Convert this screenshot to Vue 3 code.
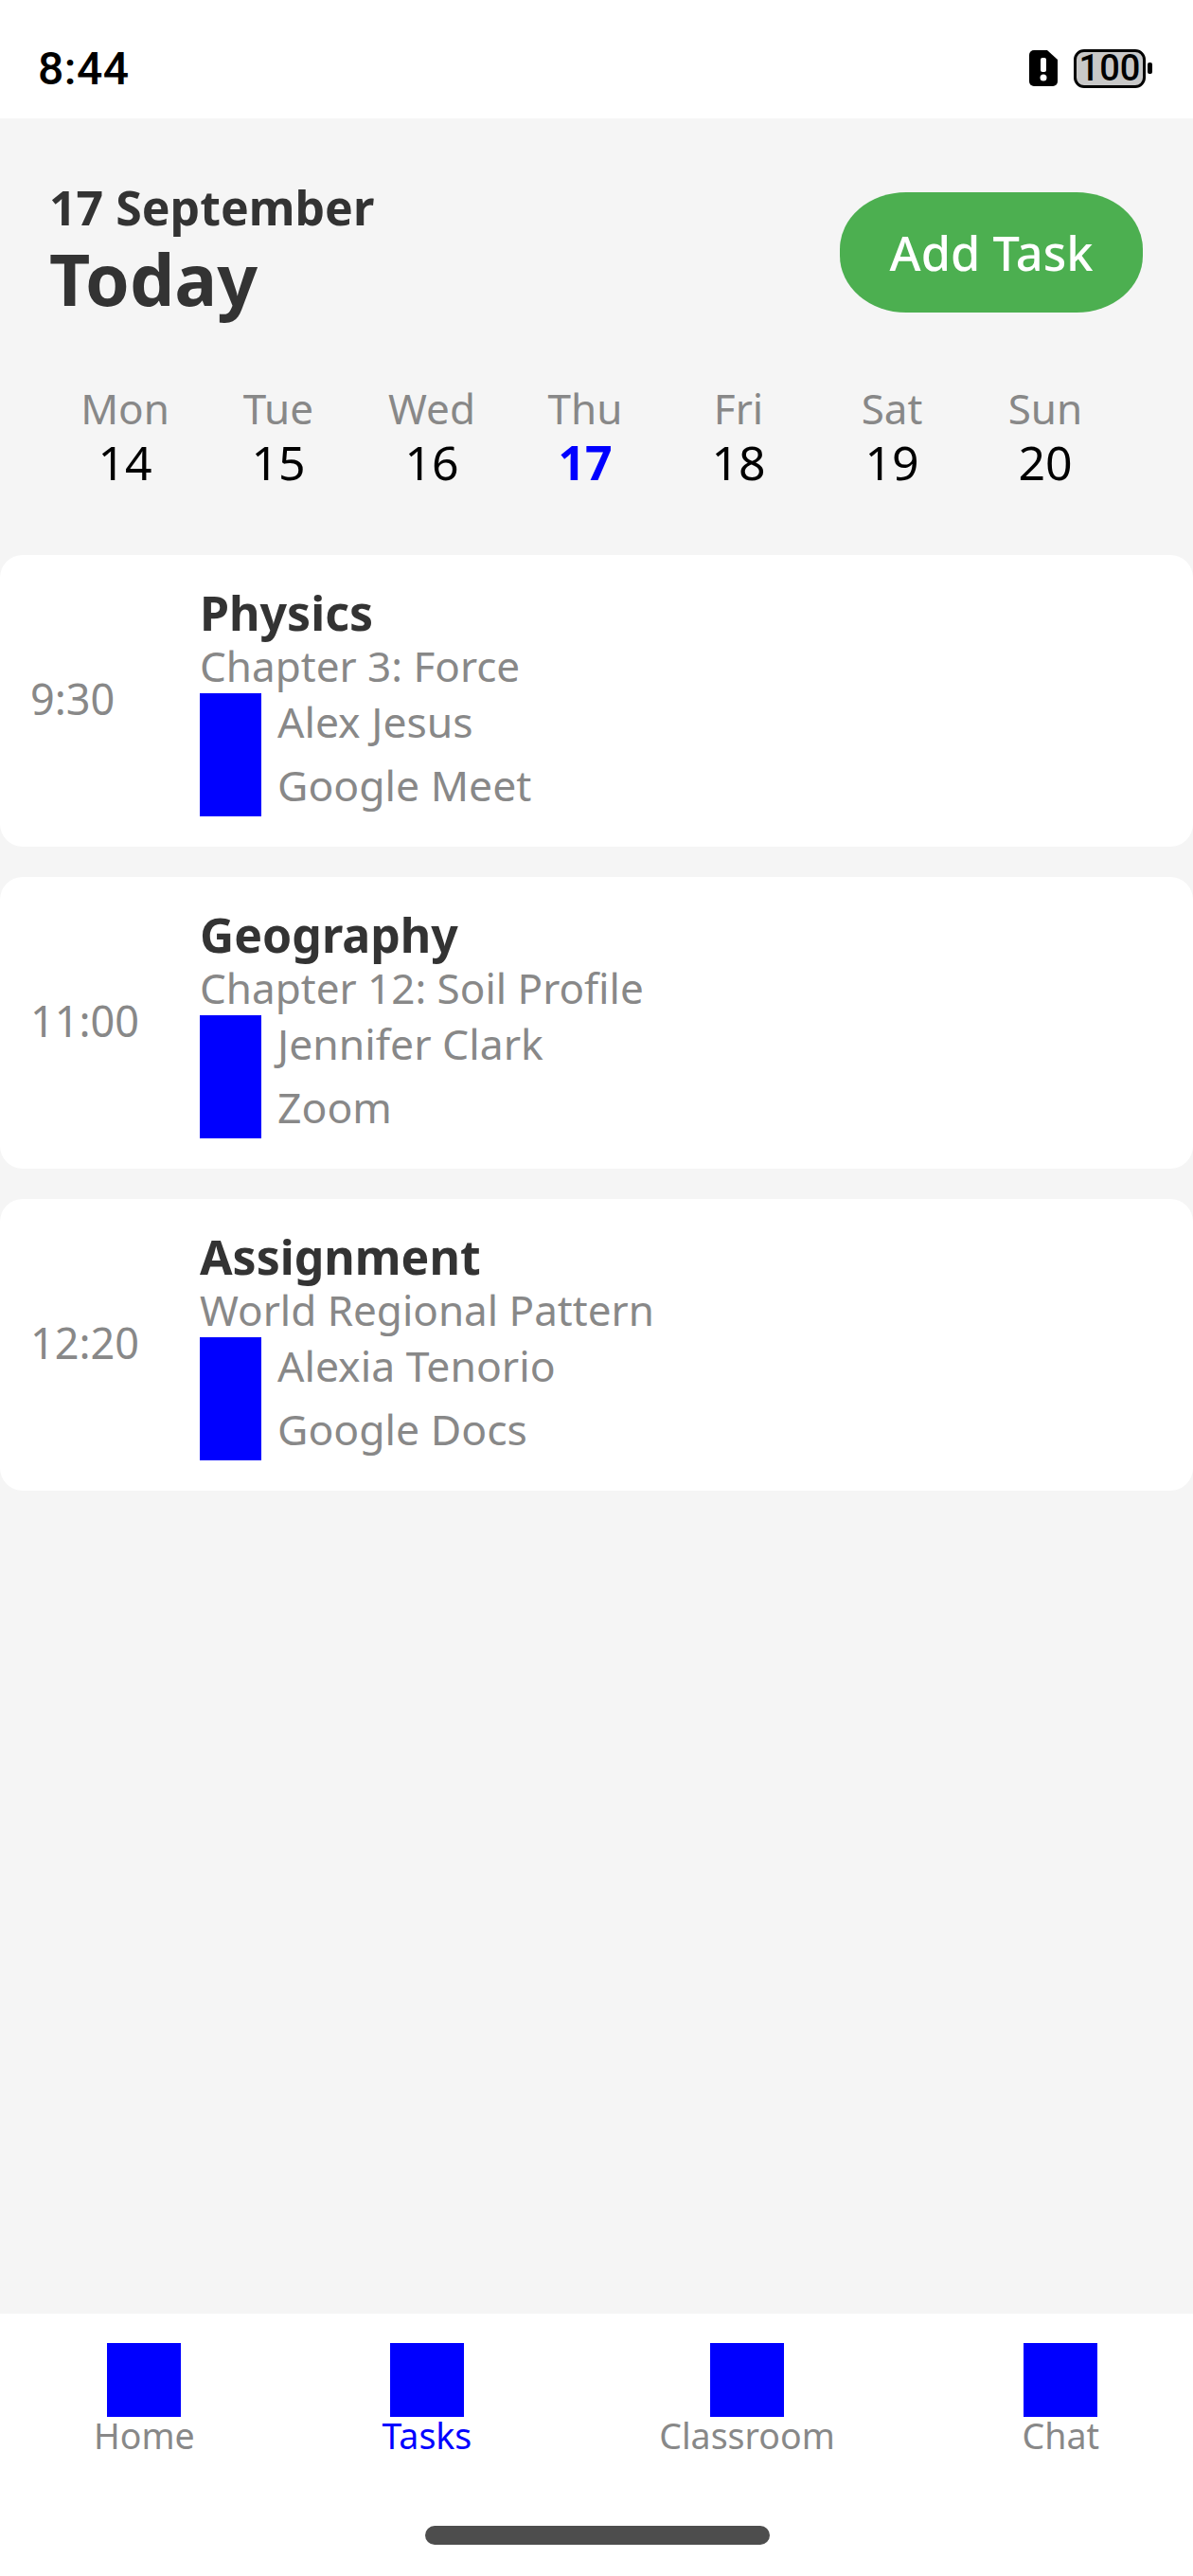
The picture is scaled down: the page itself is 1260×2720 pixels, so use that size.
<script setup>
const days = [
  { name: "Mon", num: 14 },
  { name: "Tue", num: 15 },
  { name: "Wed", num: 16 },
  { name: "Thu", num: 17, active: true },
  { name: "Fri", num: 18 },
  { name: "Sat", num: 19 },
  { name: "Sun", num: 20 },
];

const tasks = [
  { time: "9:30", title: "Physics", sub: "Chapter 3: Force", who: "Alex Jesus", where: "Google Meet" },
  { time: "11:00", title: "Geography", sub: "Chapter 12: Soil Profile", who: "Jennifer Clark", where: "Zoom" },
  { time: "12:20", title: "Assignment", sub: "World Regional Pattern", who: "Alexia Tenorio", where: "Google Docs" },
];

const tabs = [
  { label: "Home" },
  { label: "Tasks", active: true },
  { label: "Classroom" },
  { label: "Chat" },
];
</script>

<template>
  <div class="screen">
    <div class="status">
      <span class="clock">8:44</span>
      <div class="status-icons">
        <svg class="sim" width="30" height="38" viewBox="0 0 30 38">
          <path d="M5 0H19L30 10V33a5 5 0 0 1-5 5H5a5 5 0 0 1-5-5V5a5 5 0 0 1 5-5Z" fill="#000" />
          <rect x="12" y="8" width="6" height="15" rx="2" fill="#fff" />
          <circle cx="15" cy="29" r="3.5" fill="#fff" />
        </svg>
        <div class="battery"><span>100</span></div>
        <i class="battery-tip"></i>
      </div>
    </div>

    <main class="content">
      <header class="top">
        <div class="heading">
          <div class="date">17 September</div>
          <div class="today">Today</div>
        </div>
        <button class="add">Add Task</button>
      </header>

      <div class="days">
        <div v-for="d in days" :key="d.num" class="day">
          <span class="day-name">{{ d.name }}</span>
          <span class="day-num" :class="{ active: d.active }">{{ d.num }}</span>
        </div>
      </div>

      <div class="list">
        <div v-for="t in tasks" :key="t.title" class="card">
          <div class="time">{{ t.time }}</div>
          <div class="info">
            <div class="title">{{ t.title }}</div>
            <div class="sub">{{ t.sub }}</div>
            <div class="meta">
              <div class="meta-icon"></div>
              <div class="meta-text">
                <span>{{ t.who }}</span>
                <span>{{ t.where }}</span>
              </div>
            </div>
          </div>
        </div>
      </div>
    </main>

    <nav class="tabs">
      <div class="tab-row">
        <div v-for="tab in tabs" :key="tab.label" class="tab" :class="{ active: tab.active }">
          <div class="tab-icon"></div>
          <span>{{ tab.label }}</span>
        </div>
      </div>
      <div class="home-bar"></div>
    </nav>
  </div>
</template>

<style>
body {
  margin: 0;
}
</style>

<style scoped>
.screen {
  width: 1260px;
  height: 2720px;
  display: flex;
  flex-direction: column;
  background: #f5f5f5;
  font-family: "Noto Sans", "Open Sans", sans-serif;
  overflow: hidden;
}

/* status bar */
.status {
  height: 125px;
  box-sizing: border-box;
  background: #fff;
  display: flex;
  align-items: center;
  justify-content: space-between;
  padding: 19px 43px 0 40px;
  flex-shrink: 0;
}
.clock {
  font-family: Roboto, sans-serif;
  font-size: 48px;
  font-weight: 500;
  color: #000;
  letter-spacing: 0.5px;
}
.status-icons {
  display: flex;
  align-items: center;
}
.sim {
  margin-right: 17px;
}
.battery {
  width: 76px;
  height: 41px;
  box-sizing: border-box;
  border: 3.5px solid #000;
  border-radius: 11px;
  background: #c8c8c8;
  display: flex;
  align-items: center;
  justify-content: center;
}
.battery span {
  font-family: Roboto, sans-serif;
  font-size: 38px;
  font-weight: 500;
  color: #000;
  line-height: 1;
}
.battery-tip {
  display: block;
  width: 5px;
  height: 12px;
  margin-left: 2px;
  background: #000;
  border-radius: 2px;
}

/* header */
.content {
  flex: 1;
}
.top {
  display: flex;
  justify-content: space-between;
  align-items: flex-start;
  padding: 78px 53px 0 52px;
}
.heading {
  margin-top: -17px;
}
.date {
  font-size: 50px;
  line-height: 66px;
  font-weight: 700;
  color: #333;
}
.today {
  font-size: 75px;
  line-height: 84px;
  font-weight: 700;
  color: #333;
}
.add {
  width: 320px;
  height: 127px;
  border: none;
  border-radius: 70px / 60px;
  background: #4caf50;
  color: #fff;
  font-family: inherit;
  font-size: 50.5px;
  font-weight: 500;
}

/* week strip */
.days {
  display: grid;
  grid-template-columns: repeat(7, 162px);
  padding: 67px 0 0 51px;
}
.day {
  display: flex;
  flex-direction: column;
  align-items: center;
}
.day-name {
  font-size: 44px;
  line-height: 56px;
  color: #888;
}
.day-num {
  font-size: 50px;
  line-height: 58px;
  color: #000;
}
.day-num.active {
  color: #00f;
  font-weight: 700;
}

/* task cards */
.list {
  display: flex;
  flex-direction: column;
  gap: 32px;
  padding-top: 69px;
}
.card {
  height: 308px;
  background: #fff;
  border-radius: 24px;
  display: flex;
  align-items: center;
}
.time {
  width: 212px;
  padding: 0 0 6px 32px;
  box-sizing: border-box;
  flex-shrink: 0;
  font-size: 45px;
  color: #888;
}
.info {
  margin: -2px 0 0 -1px;
}
.title {
  font-size: 50px;
  line-height: 60px;
  font-weight: 700;
  color: #333;
}
.sub {
  font-size: 44px;
  line-height: 52px;
  color: #888;
}
.meta {
  display: flex;
  margin-top: 3px;
}
.meta-icon {
  width: 65px;
  height: 130px;
  background: #00f;
}
.meta-text {
  display: flex;
  flex-direction: column;
  justify-content: space-around;
  margin: -3px 0 0 17px;
  font-size: 44.5px;
  color: #888;
}

/* bottom tabs */
.tabs {
  height: 277px;
  flex-shrink: 0;
  background: #fff;
  display: flex;
  flex-direction: column;
  align-items: center;
}
.tab-row {
  width: 100%;
  display: flex;
  justify-content: space-around;
  padding-top: 31px;
}
.tab {
  display: flex;
  flex-direction: column;
  align-items: center;
  font-size: 37.5px;
  line-height: 40px;
  color: #888;
}
.tab.active {
  color: #00f;
}
.tab-icon {
  width: 78px;
  height: 78px;
  background: #00f;
}
.home-bar {
  width: 364px;
  height: 20px;
  margin: 75px 0 0 2px;
  border-radius: 10px;
  background: #4d4d4d;
}
</style>
